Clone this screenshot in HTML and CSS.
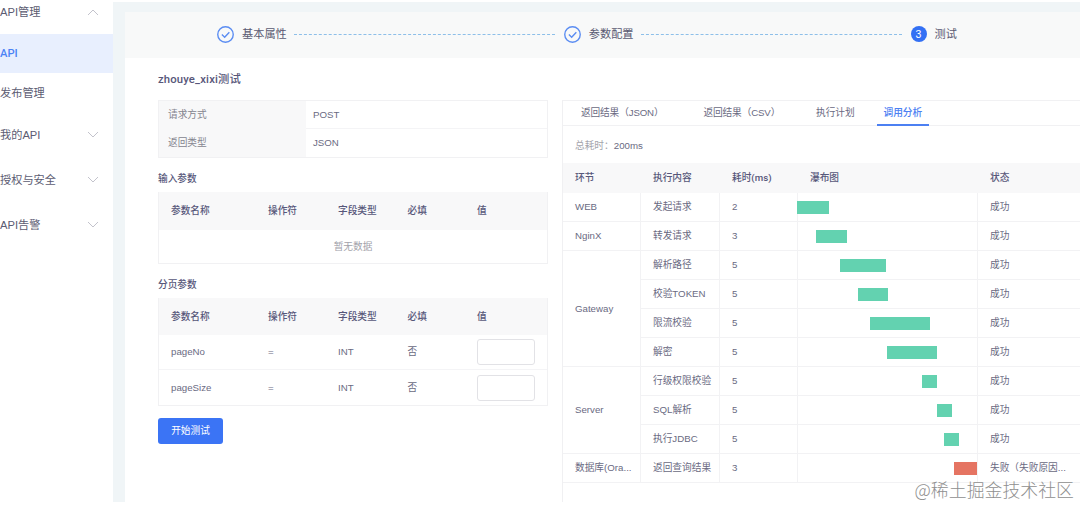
FILE: index.html
```html
<!DOCTYPE html>
<html lang="zh-CN">
<head>
  <meta charset="utf-8">
  <title>API测试</title>
  <link rel="stylesheet" href="styles.css">
</head>
<body>
  <div class="page">
    <div class="sidebar">
      <div class="menu first">API管理
        <svg class="arrow" viewBox="0 0 12 7"><path d="M1 6l5-5 5 5"/></svg>
      </div>
      <div class="menu sub active">API</div>
      <div class="menu sub">发布管理</div>
      <div class="menu">我的API
        <svg class="arrow" viewBox="0 0 12 7"><path d="M1 1l5 5 5-5"/></svg>
      </div>
      <div class="menu">授权与安全
        <svg class="arrow" viewBox="0 0 12 7"><path d="M1 1l5 5 5-5"/></svg>
      </div>
      <div class="menu">API告警
        <svg class="arrow" viewBox="0 0 12 7"><path d="M1 1l5 5 5-5"/></svg>
      </div>
    </div>

    <div class="main">
      <div class="steps">
        <svg class="step-icon" viewBox="0 0 16 16"><circle cx="8" cy="8" r="7.3"/><path d="M4.6 8l2.6 2.5 4.4-4.7"/></svg>
        <span class="step-text">基本属性</span>
        <span class="step-line"></span>
        <svg class="step-icon" viewBox="0 0 16 16"><circle cx="8" cy="8" r="7.3"/><path d="M4.6 8l2.6 2.5 4.4-4.7"/></svg>
        <span class="step-text">参数配置</span>
        <span class="step-line"></span>
        <span class="step-num">3</span>
        <span class="step-text">测试</span>
      </div>

      <div class="content">
        <div class="left">
          <h1>zhouye_xixi测试</h1>
          <table class="info">
            <tr><th>请求方式</th><td>POST</td></tr>
            <tr><th>返回类型</th><td>JSON</td></tr>
          </table>

          <h2>输入参数</h2>
          <table class="params">
            <colgroup><col class="p1"><col class="p2"><col class="p3"><col class="p3"><col></colgroup>
            <thead>
              <tr><th>参数名称</th><th>操作符</th><th>字段类型</th><th>必填</th><th>值</th></tr>
            </thead>
            <tbody>
              <tr><td class="empty" colspan="5">暂无数据</td></tr>
            </tbody>
          </table>

          <h2>分页参数</h2>
          <table class="params paging">
            <colgroup><col class="p1"><col class="p2"><col class="p3"><col class="p3"><col></colgroup>
            <thead>
              <tr><th>参数名称</th><th>操作符</th><th>字段类型</th><th>必填</th><th>值</th></tr>
            </thead>
            <tbody>
              <tr><td>pageNo</td><td>=</td><td>INT</td><td>否</td><td><input type="text"></td></tr>
              <tr><td>pageSize</td><td>=</td><td>INT</td><td>否</td><td><input type="text"></td></tr>
            </tbody>
          </table>
          <button>开始测试</button>
        </div>

        <div class="right">
          <div class="tabs">
            <span class="tab json">返回结果（JSON）</span>
            <span class="tab csv">返回结果（CSV）</span>
            <span class="tab plan">执行计划</span>
            <span class="tab on">调用分析</span>
          </div>
          <div class="total"><span>总耗时：</span>200ms</div>
          <table class="trace">
            <colgroup><col class="t1"><col class="t2"><col class="t1"><col class="t4"><col></colgroup>
            <thead>
              <tr><th>环节</th><th>执行内容</th><th>耗时(ms)</th><th>瀑布图</th><th>状态</th></tr>
            </thead>
            <tbody>
              <tr><td>WEB</td><td>发起请求</td><td>2</td><td class="fall"><div class="bar" style="margin-left:0;width:32px"></div></td><td>成功</td></tr>
              <tr><td>NginX</td><td>转发请求</td><td>3</td><td class="fall"><div class="bar" style="margin-left:18.5px;width:31.5px"></div></td><td>成功</td></tr>
              <tr><td rowspan="4">Gateway</td><td>解析路径</td><td>5</td><td class="fall"><div class="bar" style="margin-left:42.5px;width:46.5px"></div></td><td>成功</td></tr>
              <tr><td>校验TOKEN</td><td>5</td><td class="fall"><div class="bar" style="margin-left:61px;width:30px"></div></td><td>成功</td></tr>
              <tr><td>限流校验</td><td>5</td><td class="fall"><div class="bar" style="margin-left:72.5px;width:60px"></div></td><td>成功</td></tr>
              <tr><td>解密</td><td>5</td><td class="fall"><div class="bar" style="margin-left:90px;width:50px"></div></td><td>成功</td></tr>
              <tr><td rowspan="3">Server</td><td>行级权限校验</td><td>5</td><td class="fall"><div class="bar" style="margin-left:125px;width:15px"></div></td><td>成功</td></tr>
              <tr><td>SQL解析</td><td>5</td><td class="fall"><div class="bar" style="margin-left:139.5px;width:15px"></div></td><td>成功</td></tr>
              <tr><td>执行JDBC</td><td>5</td><td class="fall"><div class="bar" style="margin-left:147px;width:15px"></div></td><td>成功</td></tr>
              <tr><td>数据库(Ora...</td><td>返回查询结果</td><td>3</td><td class="fall"><div class="bar fail" style="margin-left:157px;width:22.5px"></div></td><td>失败（失败原因...</td></tr>
            </tbody>
          </table>
        </div>
      </div>
    </div>
  </div>
  <div class="watermark">@稀土掘金技术社区</div>
</body>
</html>
```

FILE: styles.css
```css
* {
  box-sizing: border-box;
}

body {
  margin: 0;
  height: 506px;
  overflow: hidden;
  background: #fff;
  color: #6a6a82;
  font-family: "Liberation Sans", "Noto Sans CJK SC", sans-serif;
  font-size: 9.7px;
  line-height: 14px;
}

.page {
  display: flex;
  height: 502px;
}

/* 左侧菜单 */
.sidebar {
  width: 113px;
  flex: none;
}

.menu {
  display: flex;
  align-items: center;
  justify-content: space-between;
  height: 45px;
  padding-right: 14px;
  font-size: 11.2px;
  color: #5c5c72;
}

.menu.first {
  height: 24px;
  margin-bottom: 10px;
}

.menu.sub {
  height: 39px;
}

.menu.active {
  height: 39px;
  background: #e8effe;
  color: #4c83f5;
  font-family: Roboto, sans-serif;
  font-weight: 500;
}

.arrow {
  width: 12px;
  height: 7px;
  fill: none;
  stroke: #c3c3cc;
}

.main {
  flex: 1;
  margin-top: 2px;
  padding-top: 10px;
  border-left: 12px solid #f0f5f7;
  background: linear-gradient(#f0f5f7 10px, #fff 10px);
}

/* 步骤条 */
.steps {
  display: flex;
  align-items: center;
  height: 46px;
  padding: 0 0 2px 92px;
  background: #f8f9f9;
}

.step-icon {
  width: 17px;
  height: 17px;
  fill: none;
  stroke: #5b8df2;
  stroke-width: 1.3;
}

.step-text {
  margin-left: 8px;
  font-size: 11.2px;
  color: #5a5a72;
}

.step-line {
  width: 261px;
  margin: 0 9px 0 7px;
  border-top: 1px dashed #8dbfe9;
}

.step-num {
  width: 16px;
  height: 16px;
  border-radius: 50%;
  background: #3370f4;
  color: #fff;
  font-size: 10.5px;
  line-height: 16px;
  text-align: center;
}

.content {
  display: flex;
  height: 444px;
  padding-left: 33px;
}

.left {
  width: 390px;
  margin-right: 14px;
  flex: none;
}

h1 {
  height: 16px;
  margin: 13px 0;
  font-family: Roboto, "Noto Sans CJK SC", sans-serif;
  font-size: 11.3px;
  font-weight: 500;
  line-height: 17px;
  letter-spacing: 0.15px;
  color: #57577a;
}

h2 {
  height: 14px;
  margin: 13px 0 7px;
  font-size: 9.7px;
  font-weight: 500;
  line-height: 15px;
  color: #57577a;
}

table {
  table-layout: fixed;
  border-collapse: separate;
  border-spacing: 0;
}

th, td {
  padding: 0;
  text-align: left;
  font-weight: 400;
  white-space: nowrap;
}

.info {
  width: 390px;
  border: 1px solid #f1f1f3;
}

.info th {
  width: 147px;
  height: 28px;
  padding-left: 9px;
  background: #f8f8f9;
  color: #85858f;
}

.info td {
  padding-left: 7px;
}

.info tr:first-child td {
  border-bottom: 1px solid #f4f4f6;
}

.params {
  width: 390px;
  border: 1px solid #f1f1f3;
  border-top: 0;
}

.p1 { width: 109px; }
.p2 { width: 70px; }
.p3 { width: 69.5px; }

.params th {
  height: 38px;
  background: #f8f8f9;
  font-weight: 500;
  color: #57577a;
}

.params th:first-child,
.params td:first-child {
  padding-left: 12px;
}

.params td.empty {
  height: 33px;
  padding: 0;
  text-align: center;
  color: #a2a2aa;
}

.paging th {
  height: 37px;
}

.paging td {
  height: 35px;
  border-bottom: 1px solid #f4f4f6;
}

.paging tr:last-child td {
  border-bottom: 0;
}

input {
  display: block;
  width: 58px;
  height: 26px;
  border: 1px solid #e2e2e6;
  border-radius: 3px;
  background: #fff;
}

button {
  display: block;
  width: 65px;
  height: 26px;
  margin-top: 12px;
  padding: 0;
  border: 0;
  border-radius: 3px;
  background: #3b74f5;
  color: #fff;
  font: inherit;
}

/* 右侧结果 */
.right {
  flex: 1;
  margin-top: 42px;
  border-left: 1px solid #f0f0f2;
}

.tabs {
  display: flex;
  height: 26px;
  border-top: 1px solid #f1f1f3;
  border-bottom: 1px solid #f1f1f3;
  line-height: 24px;
}

.json { margin-left: 18px; width: 122.5px; }
.csv { width: 112.5px; }
.plan { width: 61px; }

.json, .csv {
  letter-spacing: -0.15px;
}

.tab.on {
  height: 25px;
  padding: 0 6.5px;
  border-bottom: 2px solid #4c80f2;
  color: #4c80f2;
  font-weight: 500;
}

.total {
  height: 37px;
  padding-left: 12px;
  line-height: 39px;
}

.total span {
  color: #a4a4ac;
}

.trace {
  width: 100%;
}

.t1 { width: 78px; }
.t2 { width: 79px; }
.t4 { width: 180px; }

.trace th {
  height: 30px;
  padding-left: 12px;
  background: #f8f8f9;
  font-family: Roboto, "Noto Sans CJK SC", sans-serif;
  font-weight: 500;
  color: #57577a;
}

.trace td {
  height: 29px;
  padding-left: 12px;
  border-right: 1px solid #f2f2f4;
  border-bottom: 1px solid #f2f2f4;
}

.trace td:last-child {
  border-right: 0;
}

.trace .fall {
  padding-left: 0;
}

.bar {
  position: relative;
  left: -1px;
  height: 13px;
  background: #63d2b0;
}

.bar.fail {
  background: #e57462;
}

.watermark {
  position: absolute;
  right: 6px;
  bottom: 6px;
  font-family: "Noto Sans CJK SC", sans-serif;
  font-size: 17.9px;
  font-weight: 300;
  line-height: 22px;
  color: #8f8f8f;
}
```
